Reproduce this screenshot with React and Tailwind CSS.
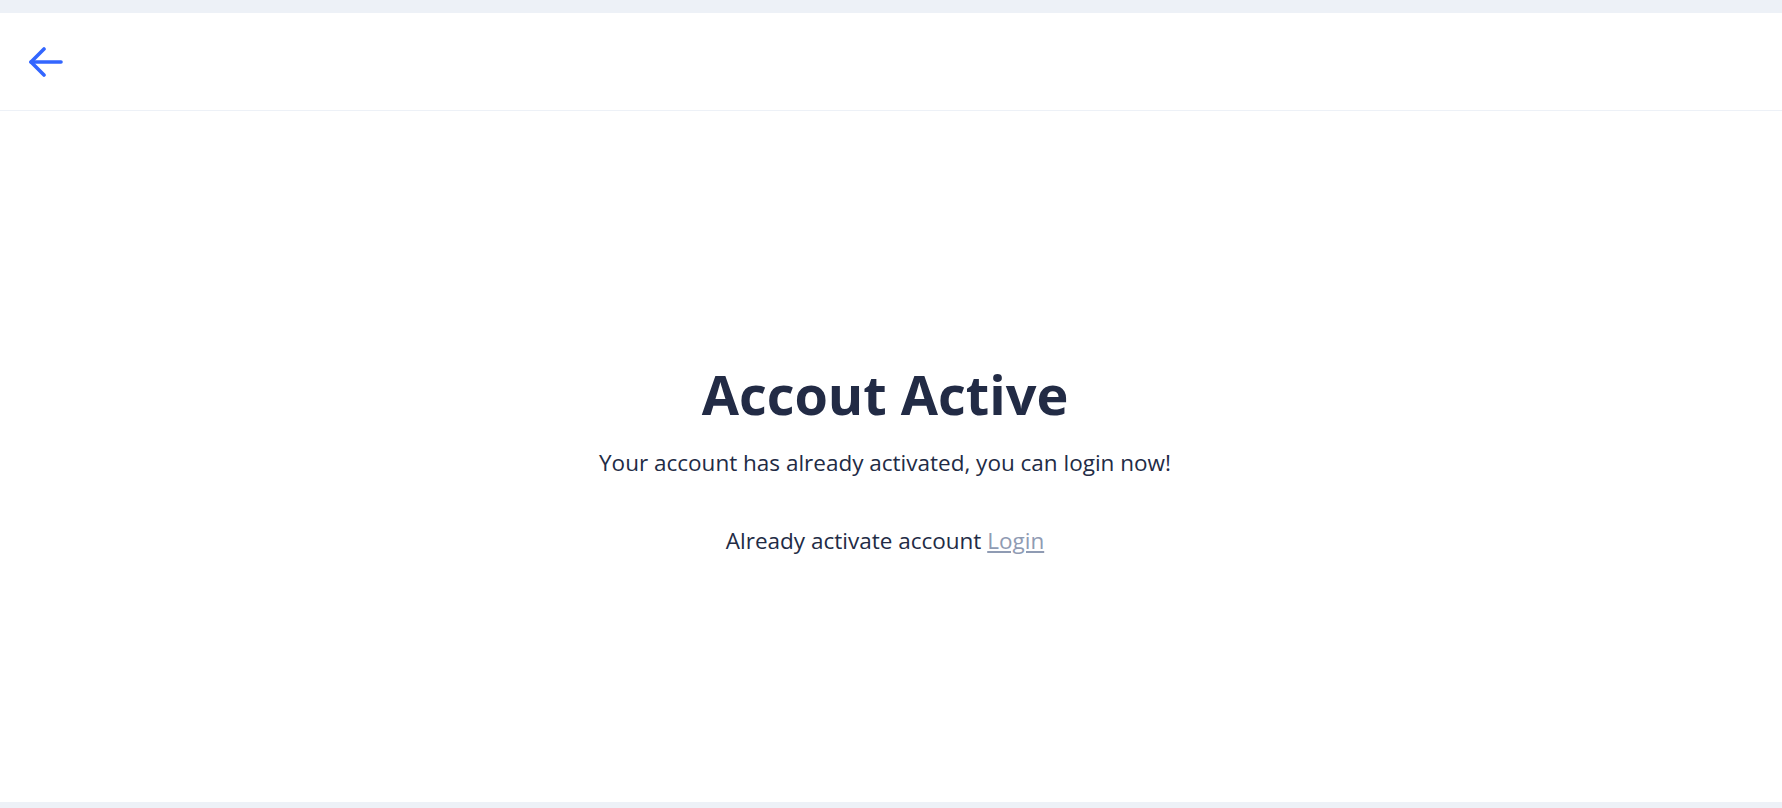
const BackArrow = () => (
  <svg width="34" height="30" viewBox="0 0 34 30" fill="none" stroke="#3366ff" strokeWidth="3.6" strokeLinecap="round" strokeLinejoin="round">
    <path d="M15 2 L2 15 L15 28" />
    <path d="M2 15 H32" />
  </svg>
);

export default function App() {
  return (
    <div className="min-h-screen bg-[#edf1f7] pt-[13px] pb-[6px] font-['Open_Sans',sans-serif] text-[#222b45]">
      <div className="bg-white">
        {/* Header */}
        <header className="h-[98px] border-b border-[#edf1f7] flex items-center pl-[29px]">
          <button className="flex items-center">
            <BackArrow />
          </button>
        </header>

        {/* Content */}
        <main className="h-[691px] flex flex-col items-center pt-[250px] pr-[12px] text-center">
          <h1 className="text-[54px] leading-[67px] font-bold">Accout Active</h1>
          <p className="mt-[21px] text-[22.5px] leading-[28px]">
            Your account has already activated, you can login now!
          </p>
          <p className="mt-[50px] text-[22.5px] leading-[28px]">
            Already activate account{' '}
            <a href="#" className="text-[#8f9bb3] underline">Login</a>
          </p>
        </main>
      </div>
    </div>
  );
}
